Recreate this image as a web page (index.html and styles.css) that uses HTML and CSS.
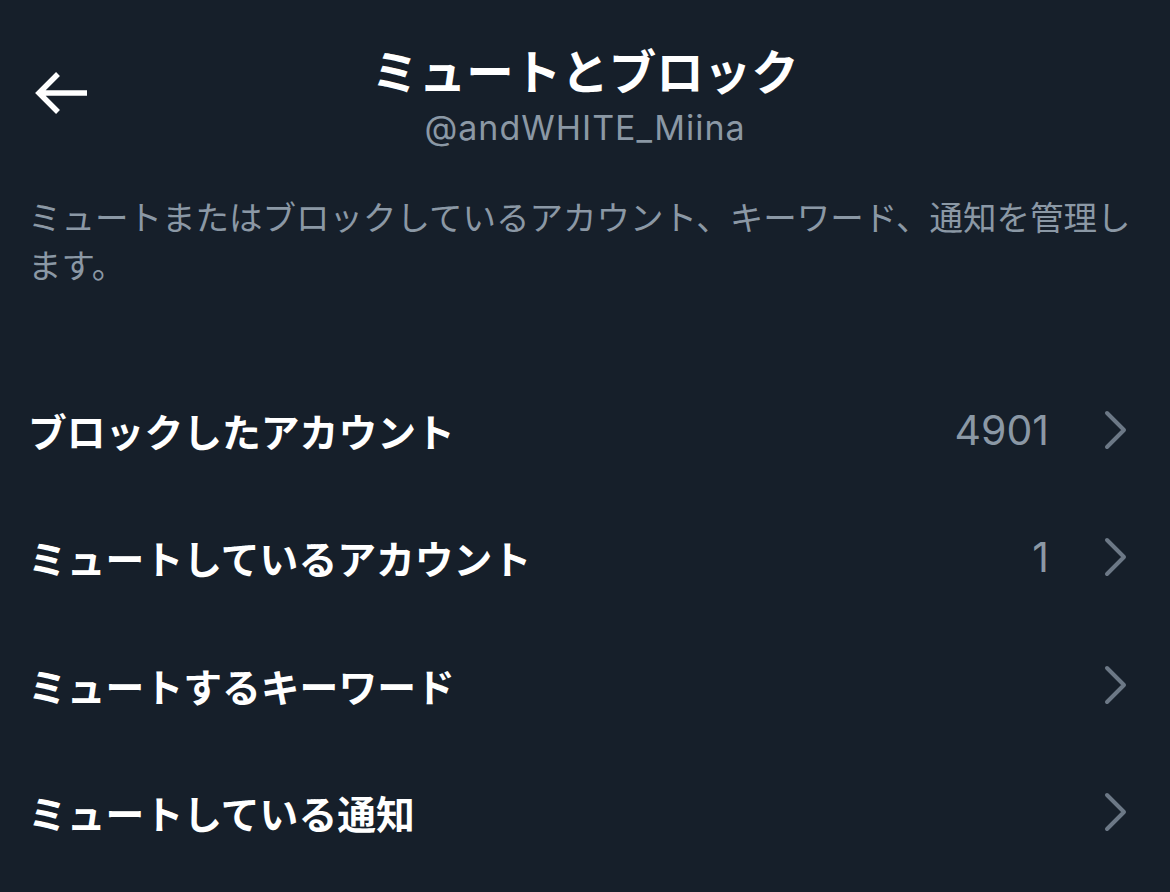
FILE: index.html
```html
<!DOCTYPE html>
<html lang="ja">
<head>
<meta charset="utf-8">
<title>ミュートとブロック</title>
<link rel="stylesheet" href="styles.css">
</head>
<body>
<div class="screen">
  <header class="header">
    <div class="back">
      <svg width="60" height="48" viewBox="0 0 60 48" aria-hidden="true">
        <path d="M57 24H9M28 5L9 24l19 19" fill="none" stroke="#ffffff" stroke-width="5.5" stroke-linecap="butt" stroke-linejoin="miter"/>
      </svg>
    </div>
    <div class="titles">
      <h1 class="title">ミュートとブロック</h1>
      <div class="handle">@andWHITE_Miina</div>
    </div>
    <div class="spacer"></div>
  </header>

  <p class="desc">ミュートまたはブロックしているアカウント、キーワード、通知を管理します。</p>

  <ul class="list">
    <li class="row">
      <span class="label">ブロックしたアカウント</span>
      <span class="count">4901</span>
      <svg class="chev" width="26" height="40" viewBox="0 0 26 40" aria-hidden="true"><path d="M5 3l17 17L5 37" fill="none" stroke="#6c7886" stroke-width="4" stroke-linecap="round" stroke-linejoin="round"/></svg>
    </li>
    <li class="row">
      <span class="label">ミュートしているアカウント</span>
      <span class="count">1</span>
      <svg class="chev" width="26" height="40" viewBox="0 0 26 40" aria-hidden="true"><path d="M5 3l17 17L5 37" fill="none" stroke="#6c7886" stroke-width="4" stroke-linecap="round" stroke-linejoin="round"/></svg>
    </li>
    <li class="row">
      <span class="label">ミュートするキーワード</span>
      <svg class="chev" width="26" height="40" viewBox="0 0 26 40" aria-hidden="true"><path d="M5 3l17 17L5 37" fill="none" stroke="#6c7886" stroke-width="4" stroke-linecap="round" stroke-linejoin="round"/></svg>
    </li>
    <li class="row">
      <span class="label">ミュートしている通知</span>
      <svg class="chev" width="26" height="40" viewBox="0 0 26 40" aria-hidden="true"><path d="M5 3l17 17L5 37" fill="none" stroke="#6c7886" stroke-width="4" stroke-linecap="round" stroke-linejoin="round"/></svg>
    </li>
  </ul>
</div>
</body>
</html>
```

FILE: styles.css
```css
html, body {
  margin: 0;
  padding: 0;
  background: #161f2a;
}

body {
  width: 1170px;
  height: 892px;
  overflow: hidden;
  font-family: "Noto Sans CJK JP", "Noto Sans", sans-serif;
  color: #ffffff;
}

.screen {
  width: 1170px;
  height: 892px;
}

.header {
  display: grid;
  grid-template-columns: 1fr auto 1fr;
  padding-top: 42px;
}

.back {
  align-self: start;
  margin-top: 27px;
  padding-left: 30px;
  line-height: 0;
}

.titles {
  text-align: center;
}

.title {
  margin: 0;
  font-size: 47.5px;
  font-weight: 700;
  line-height: 56px;
  color: #ffffff;
}

.handle {
  margin-top: 10px;
  font-family: "Inter", "Noto Sans", sans-serif;
  font-size: 34px;
  letter-spacing: 1px;
  line-height: 40px;
  color: #8b98a5;
}

.desc {
  margin: 44px 0 0;
  padding: 0 28px;
  font-size: 33.5px;
  line-height: 48px;
  color: #8b98a5;
}

.list {
  list-style: none;
  margin: 78px 0 0;
  padding: 0;
}

.row {
  display: flex;
  align-items: center;
  height: 127.5px;
  padding: 0 42px 0 28px;
}

.label {
  flex: 1;
  font-size: 38.8px;
  font-weight: 700;
  line-height: 48px;
  color: #ffffff;
}

.count {
  margin-right: 53px;
  font-family: "Inter", "Noto Sans", sans-serif;
  font-size: 41px;
  line-height: 48px;
  color: #8b98a5;
}

.chev {
  flex: none;
}
```
